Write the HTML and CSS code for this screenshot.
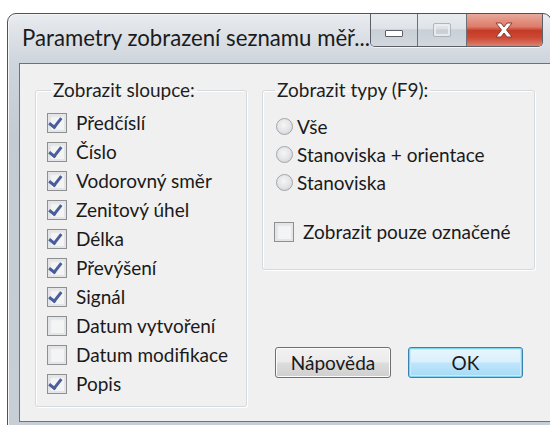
FILE: index.html
```html
<!DOCTYPE html>
<html lang="cs">
<head>
<meta charset="utf-8">
<title>Parametry zobrazení seznamu měření</title>
<link rel="stylesheet" href="styles.css">
</head>
<body>
<div class="window">
  <div class="titlebar">
    <div class="title">Parametry zobrazení seznamu měř...</div>
    <div class="caption-buttons">
      <div class="cap cap-min"><span class="min-glyph"></span></div>
      <div class="cap cap-max"><span class="max-glyph"></span></div>
      <div class="cap cap-close">
        <svg width="24" height="18" viewBox="0 0 24 18">
          <path d="M4 2 L9 2 L12 6 L15 2 L20 2 L14.5 9 L20 16 L15 16 L12 12 L9 16 L4 16 L9.5 9 Z" fill="#fff" stroke="#8a3a30" stroke-width="1"/>
        </svg>
      </div>
    </div>
  </div>
  <div class="client">
    <fieldset class="group group-cols">
      <legend>Zobrazit sloupce:</legend>
      <label class="row"><span class="cb on"></span>Předčíslí</label>
      <label class="row"><span class="cb on"></span>Číslo</label>
      <label class="row"><span class="cb on"></span>Vodorovný směr</label>
      <label class="row"><span class="cb on"></span>Zenitový úhel</label>
      <label class="row"><span class="cb on"></span>Délka</label>
      <label class="row"><span class="cb on"></span>Převýšení</label>
      <label class="row"><span class="cb on"></span>Signál</label>
      <label class="row"><span class="cb"></span>Datum vytvoření</label>
      <label class="row"><span class="cb"></span>Datum modifikace</label>
      <label class="row"><span class="cb on"></span>Popis</label>
    </fieldset>
    <div class="right-col">
      <fieldset class="group group-types">
        <legend>Zobrazit typy (F9):</legend>
        <label class="row row-radio"><span class="rb"></span>Vše</label>
        <label class="row row-radio"><span class="rb"></span>Stanoviska + orientace</label>
        <label class="row row-radio"><span class="rb"></span>Stanoviska</label>
        <label class="row row-only"><span class="cb"></span>Zobrazit pouze označené</label>
      </fieldset>
      <div class="buttons">
        <button class="btn">Nápověda</button>
        <button class="btn btn-default">OK</button>
      </div>
    </div>
  </div>
</div>
</body>
</html>
```
FILE: styles.css
```css
* { box-sizing: border-box; }

html, body {
  margin: 0;
  padding: 0;
  background: #fff;
  width: 550px;
  height: 425px;
  overflow: hidden;
}

body {
  font-family: Lato, "Noto Sans", sans-serif;
  color: #1a1a1a;
}

/* Window frame */
.window {
  margin: 13px 0 0 7px;
  width: 545px;
  height: 420px;
  border: 1px solid #4f5257;
  border-radius: 9px 9px 0 0;
  background: linear-gradient(180deg, #e9ecef 0px, #dde2e7 20px, #cfd5dc 48px, #c4cbd3 120px, #c7ced6 100%);
  box-shadow: inset 1px 1px 0 #f4f6f8;
}

.titlebar {
  height: 49px;
  display: flex;
  align-items: flex-start;
  justify-content: space-between;
  padding-left: 14px;
}

.title {
  font-size: 22.2px;
  color: #1b1b1b;
  line-height: 24px;
  padding-top: 12px;
  white-space: nowrap;
}

/* Caption buttons */
.caption-buttons {
  display: flex;
  margin-right: 8px;
  border: 1px solid #5b5f66;
  border-top: none;
  border-radius: 0 0 5px 5px;
  overflow: hidden;
  height: 33px;
  box-shadow: 0 1px 0 rgba(255,255,255,0.7);
}

.cap {
  height: 32px;
  display: flex;
  align-items: center;
  justify-content: center;
}

.cap-min, .cap-max {
  width: 48px;
  background: linear-gradient(180deg, #e9ecef 0%, #dfe3e7 45%, #c9cfd6 50%, #d2d8de 100%);
  border-right: 1px solid #6c7077;
}

.cap-max { width: 49px; }

.min-glyph {
  width: 18px;
  height: 7px;
  margin-top: 6px;
  background: #fff;
  border: 1px solid #5c6066;
  border-radius: 1px;
}

.max-glyph {
  width: 16px;
  height: 12px;
  border: 2px solid #eef0f2;
  outline: 1px solid #a4aab1;
  border-radius: 1px;
  opacity: 0.8;
}

.cap-close {
  width: 76px;
  background: linear-gradient(180deg, #e9a99b 0%, #dd7b69 40%, #c43a26 52%, #cc4a36 75%, #de8070 100%);
}

/* Client area */
.client {
  margin-left: 11px;
  height: 359px;
  background: #f0f0f0;
  border: 1px solid #6e7379;
  border-right: none;
  display: flex;
  align-items: flex-start;
  padding: 16px 0 0 15px;
  gap: 15px;
}

.group {
  margin: 0;
  border: 1px solid #d5dadf;
  border-radius: 3px;
  box-shadow: inset 1px 1px 0 #fff, 1px 1px 0 #fff;
  font-size: 19px;
}

.group legend {
  padding: 0 2px;
  line-height: 20px;
  color: #1e1e1e;
}

.group-cols {
  width: 212px;
  height: 327px;
  padding: 8px 0 0 11px;
}

.group-cols legend { margin-left: 4px; }

.right-col {
  display: flex;
  flex-direction: column;
  width: 273px;
  height: 327px;
}

.group-types {
  width: 273px;
  height: 190px;
  padding: 12px 0 0 13px;
}

.group-types legend { margin-left: -1px; }

.row {
  display: flex;
  align-items: center;
  height: 29px;
  white-space: nowrap;
  color: #1a1a1a;
}

.row-radio { height: 28px; }
.row-only { margin-top: 21px; margin-left: -2px; }

/* Checkbox */
.cb {
  position: relative;
  flex: none;
  width: 20px;
  height: 20px;
  margin-right: 9px;
  border: 1px solid #8e8f8f;
  background: #f4f4f4;
  box-shadow: inset 0 0 0 2px #e3e5e8, inset 2px 2px 2px #c9cbcf;
}

.cb.on::after {
  content: "";
  position: absolute;
  left: 4px;
  top: 2px;
  width: 5px;
  height: 10px;
  border-right: 3px solid #4a5e9c;
  border-bottom: 3px solid #4a5e9c;
  transform: rotate(38deg);
  transform-origin: 60% 40%;
}

/* Radio */
.rb {
  flex: none;
  width: 17px;
  height: 17px;
  margin-right: 4px;
  border-radius: 50%;
  border: 1px solid #a3a6a9;
  background: radial-gradient(circle at 45% 40%, #f6f6f6 0%, #e2e3e5 55%, #c8cacd 100%);
}

/* Buttons */
.buttons {
  margin-top: auto;
  margin-bottom: 29px;
  display: flex;
  gap: 17px;
  padding-left: 13px;
}

.btn {
  height: 31px;
  font-family: inherit;
  font-size: 19px;
  color: #1a1a1a;
  border: 1px solid #707070;
  border-radius: 3px;
  background: linear-gradient(180deg, #f2f2f2 0%, #ebebeb 48%, #dddddd 52%, #cfcfcf 100%);
  box-shadow: inset 0 0 0 1px #fcfcfc;
  padding: 0;
  line-height: 27px;
}

.btn:first-child { width: 116px; }

.btn-default {
  width: 115px;
  border-color: #3c7fb1;
  box-shadow: inset 0 0 0 1px #7fd4f2, inset 0 0 0 2px #c6ecf8;
  background: linear-gradient(180deg, #eaf6fd 0%, #d9f0fc 48%, #bee6fd 52%, #a7d9f5 100%);
}
```
